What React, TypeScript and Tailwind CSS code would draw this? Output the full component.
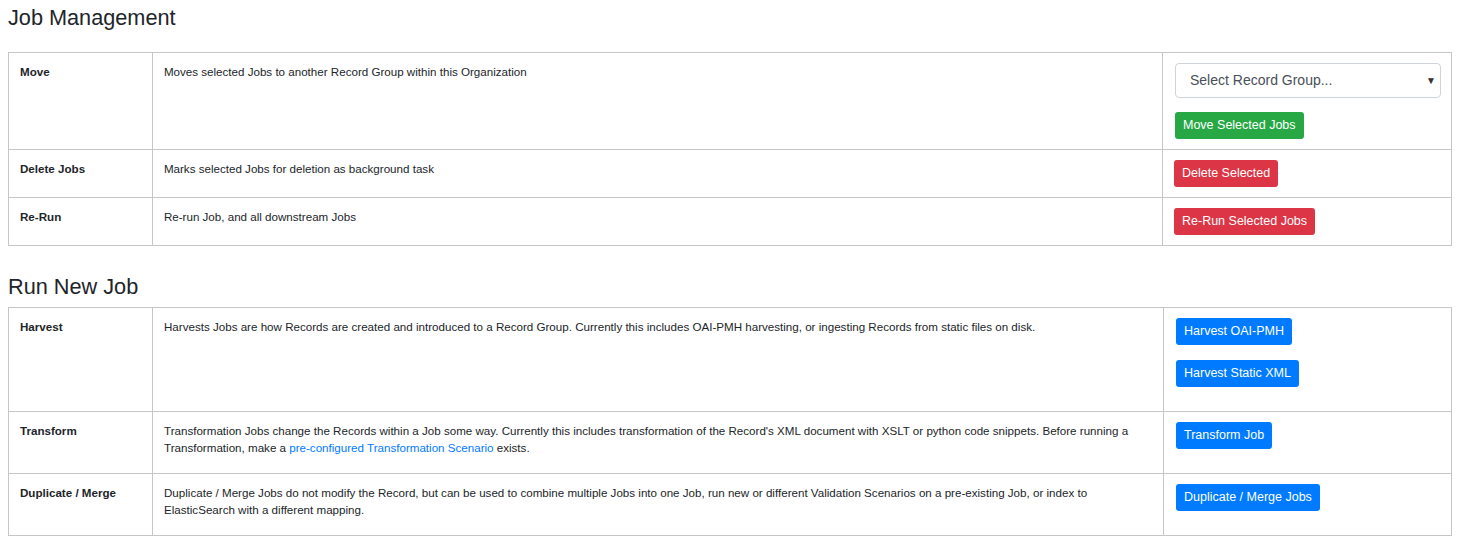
import React from "react";

type Row = {
  label: string;
  desc: React.ReactNode;
  actions: React.ReactNode;
};

const btnBase =
  "inline-block h-[27px] px-[8px] rounded-[3px] text-white text-[12.5px] leading-[27px] whitespace-nowrap";

function Btn({ color, children, className = "" }: { color: "green" | "red" | "blue"; children: React.ReactNode; className?: string }) {
  const bg =
    color === "green" ? "bg-[#28a745]" : color === "red" ? "bg-[#dc3545]" : "bg-[#007bff]";
  return <button className={`${btnBase} ${bg} ${className}`}>{children}</button>;
}

function JobTable({ rows }: { rows: Row[] }) {
  return (
    <table className="w-full border-collapse border border-[#c6c6c6] text-[11.6px] leading-[17px] text-[#212529]">
      <colgroup>
        <col className="w-[144px]" />
        <col className="w-[1011px]" />
        <col />
      </colgroup>
      <tbody>
        {rows.map((r) => (
          <tr key={r.label} className="border-t border-[#c6c6c6] align-top">
            <td className="border-r border-[#c6c6c6] py-[10px] px-[11px] font-bold">{r.label}</td>
            <td className="border-r border-[#c6c6c6] py-[10px] px-[11px]">{r.desc}</td>
            <td className="py-[10px] pl-[12px] pr-[10px]">{r.actions}</td>
          </tr>
        ))}
      </tbody>
    </table>
  );
}

export default function App() {
  const mgmt: Row[] = [
    {
      label: "Move",
      desc: "Moves selected Jobs to another Record Group within this Organization",
      actions: (
        <div className="flex flex-col items-start">
          <div className="relative w-[266px] h-[35px] border border-[#ced4da] rounded-[4px] bg-white">
            <span className="absolute left-[14px] top-0 leading-[33px] text-[14px] text-[#495057]">
              Select Record Group...
            </span>
            <span className="absolute right-[4px] top-0 leading-[33px] text-[10px] text-[#333]">▼</span>
          </div>
          <Btn color="green" className="mt-[14px]">Move Selected Jobs</Btn>
        </div>
      ),
    },
    {
      label: "Delete Jobs",
      desc: "Marks selected Jobs for deletion as background task",
      actions: <Btn color="red" className="-ml-px">Delete Selected</Btn>,
    },
    {
      label: "Re-Run",
      desc: "Re-run Job, and all downstream Jobs",
      actions: <Btn color="red" className="-ml-px">Re-Run Selected Jobs</Btn>,
    },
  ];

  const run: Row[] = [
    {
      label: "Harvest",
      desc: "Harvests Jobs are how Records are created and introduced to a Record Group. Currently this includes OAI-PMH harvesting, or ingesting Records from static files on disk.",
      actions: (
        <div className="flex flex-col items-start">
          <Btn color="blue">Harvest OAI-PMH</Btn>
          <Btn color="blue" className="mt-[15px] mb-[14px]">Harvest Static XML</Btn>
        </div>
      ),
    },
    {
      label: "Transform",
      desc: (
        <>
          Transformation Jobs change the Records within a Job some way. Currently this includes transformation of the
          Record's XML document with XSLT or python code snippets. Before running a Transformation, make a{" "}
          <a className="text-[#007bff]">pre-configured Transformation Scenario</a> exists.
        </>
      ),
      actions: (
        <div className="flex flex-col items-start mb-[14px]">
          <Btn color="blue">Transform Job</Btn>
        </div>
      ),
    },
    {
      label: "Duplicate / Merge",
      desc: "Duplicate / Merge Jobs do not modify the Record, but can be used to combine multiple Jobs into one Job, run new or different Validation Scenarios on a pre-existing Job, or index to ElasticSearch with a different mapping.",
      actions: (
        <div className="flex flex-col items-start mb-[14px]">
          <Btn color="blue">Duplicate / Merge Jobs</Btn>
        </div>
      ),
    },
  ];

  return (
    <div className="bg-white min-h-[547px] pl-[8px] pr-[13px] font-['Liberation_Sans',Arial,sans-serif] text-[#212529]">
      <h3 className="pt-[6px] text-[21.7px] leading-[24px] font-normal">Job Management</h3>
      <div className="mt-[22px]">
        <JobTable rows={mgmt} />
      </div>
      <h3 className="mt-[29px] text-[21.7px] leading-[24px] font-normal">Run New Job</h3>
      <div className="mt-[8px]">
        <JobTable rows={run} />
      </div>
    </div>
  );
}
